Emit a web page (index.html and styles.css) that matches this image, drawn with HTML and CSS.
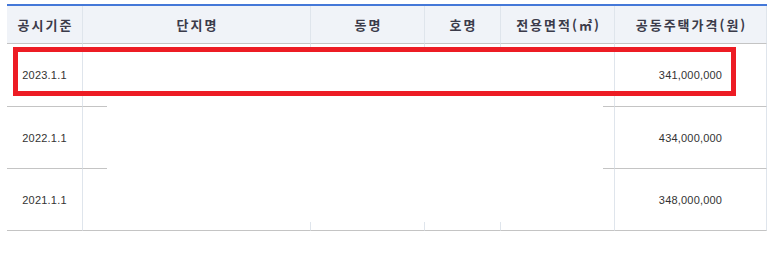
FILE: index.html
```html
<!DOCTYPE html>
<html lang="ko">
<head>
<meta charset="utf-8">
<title>공동주택가격</title>
<link rel="stylesheet" href="styles.css">
</head>
<body>
<div class="wrap">
  <div class="price-table">
    <div class="cell head">공시기준</div>
    <div class="cell head">단지명</div>
    <div class="cell head">동명</div>
    <div class="cell head">호명</div>
    <div class="cell head">전용면적(㎡)</div>
    <div class="cell head">공동주택가격(원)</div>

    <div class="cell num">2023.1.1</div>
    <div class="cell"></div>
    <div class="cell"></div>
    <div class="cell"></div>
    <div class="cell"></div>
    <div class="cell num">341,000,000</div>

    <div class="cell num">2022.1.1</div>
    <div class="cell"></div>
    <div class="cell"></div>
    <div class="cell"></div>
    <div class="cell"></div>
    <div class="cell num">434,000,000</div>

    <div class="cell num">2021.1.1</div>
    <div class="cell"></div>
    <div class="cell"></div>
    <div class="cell"></div>
    <div class="cell"></div>
    <div class="cell num">348,000,000</div>
  </div>
  <div class="mask"></div>
  <div class="highlight"></div>
</div>
</body>
</html>
```

FILE: styles.css
```css
html, body {
  margin: 0;
  padding: 0;
  background: #ffffff;
}

.wrap {
  position: relative;
  padding: 4px 0 0 7px;
  width: 760px;
  height: 252px;
}

.price-table {
  display: grid;
  grid-template-columns: 76px 228px 114px 76px 114px 152px;
  grid-template-rows: 38px 63px 62px 62px;
  border-top: 2px solid #4478d8;
  width: 760px;
}

.cell {
  box-sizing: border-box;
  display: flex;
  align-items: center;
  justify-content: center;
  border-right: 1px solid #dfe5ec;
  border-bottom: 1px solid #c4c4c4;
}

.head {
  background: #f0f3f8;
  font-family: "Noto Sans CJK KR", "Noto Sans", sans-serif;
  font-weight: 700;
  font-size: 13px;
  letter-spacing: 2px;
  color: #3b3b4a;
  padding-left: 2px;
}

.num {
  font-family: "Liberation Sans", Arial, sans-serif;
  font-size: 11px;
  letter-spacing: 0.2px;
  color: #333333;
}

/* blank panel over the name columns */
.mask {
  position: absolute;
  left: 107px;
  top: 49px;
  width: 496px;
  height: 173px;
  background: #ffffff;
}

/* red outline around the latest row */
.highlight {
  position: absolute;
  left: 13px;
  top: 47px;
  width: 723px;
  height: 49px;
  box-sizing: border-box;
  border: 5px solid #ed1c24;
}
```
